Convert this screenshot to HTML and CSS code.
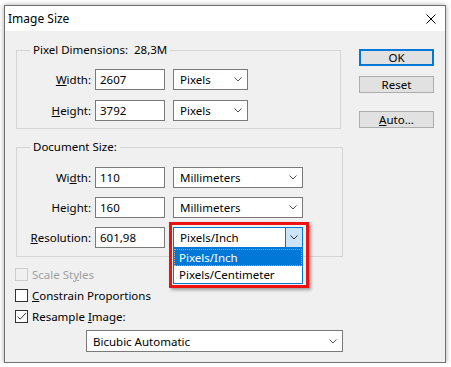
FILE: index.html
```html
<!DOCTYPE html>
<html lang="en">

<head>
    <meta charset="UTF-8">
    <title>Image Size</title>
    <link rel="stylesheet" href="styles.css">
</head>

<body>
    <div class="window">
        <div class="titlebar">
            <span class="title">Image Size</span>
            <svg class="close" width="10" height="10" viewBox="0 0 10 10">
                <path d="M0.5 0.5 L9.5 9.5 M9.5 0.5 L0.5 9.5" stroke="#000" stroke-width="1" fill="none"/>
            </svg>
        </div>
        <div class="client">
            <div class="main">
                <fieldset class="group pixels-group">
                    <legend>Pixel Dimensions:&nbsp; 28,3M</legend>
                    <div class="row">
                        <label><u>W</u>idth:</label>
                        <input class="field" type="text" value="2607" readonly>
                        <div class="select short">
                            <span>Pixels</span>
                            <svg width="8" height="5" viewBox="0 0 8 5"><path d="M0.5 0.5 L4 4 L7.5 0.5" stroke="#555" fill="none"/></svg>
                        </div>
                    </div>
                    <div class="row">
                        <label><u>H</u>eight:</label>
                        <input class="field" type="text" value="3792" readonly>
                        <div class="select short">
                            <span>Pixels</span>
                            <svg width="8" height="5" viewBox="0 0 8 5"><path d="M0.5 0.5 L4 4 L7.5 0.5" stroke="#555" fill="none"/></svg>
                        </div>
                    </div>
                </fieldset>

                <fieldset class="group doc-group">
                    <legend>Document Size:</legend>
                    <div class="row">
                        <label>Wi<u>d</u>th:</label>
                        <input class="field" type="text" value="110" readonly>
                        <div class="select long">
                            <span>Millimeters</span>
                            <svg width="8" height="5" viewBox="0 0 8 5"><path d="M0.5 0.5 L4 4 L7.5 0.5" stroke="#555" fill="none"/></svg>
                        </div>
                    </div>
                    <div class="row">
                        <label>Hei<u>g</u>ht:</label>
                        <input class="field" type="text" value="160" readonly>
                        <div class="select long">
                            <span>Millimeters</span>
                            <svg width="8" height="5" viewBox="0 0 8 5"><path d="M0.5 0.5 L4 4 L7.5 0.5" stroke="#555" fill="none"/></svg>
                        </div>
                    </div>
                    <div class="row">
                        <label><u>R</u>esolution:</label>
                        <input class="field" type="text" value="601,98" readonly>
                        <div class="select long open">
                            <span>Pixels/Inch</span>
                            <span class="drop-btn">
                                <svg width="8" height="5" viewBox="0 0 8 5"><path d="M0.5 0.5 L4 4 L7.5 0.5" stroke="#333" fill="none"/></svg>
                            </span>
                            <div class="highlight-box"></div>
                            <ul class="drop-list">
                                <li class="active">Pixels/Inch</li>
                                <li>Pixels/Centimeter</li>
                            </ul>
                        </div>
                    </div>
                </fieldset>

                <div class="checks">
                    <div class="check disabled"><span class="box"></span><span>Scale St<u>y</u>les</span></div>
                    <div class="check"><span class="box"></span><span><u>C</u>onstrain Proportions</span></div>
                    <div class="check">
                        <span class="box">
                            <svg width="11" height="11" viewBox="0 0 11 11"><path d="M1.5 5.5 L4.2 8.2 L9.8 2.2" stroke="#333" stroke-width="1" fill="none"/></svg>
                        </span>
                        <span>Resample <u>I</u>mage:</span>
                    </div>
                </div>

                <div class="select method">
                    <span>Bicubic Automatic</span>
                    <svg width="8" height="5" viewBox="0 0 8 5"><path d="M0.5 0.5 L4 4 L7.5 0.5" stroke="#555" fill="none"/></svg>
                </div>
            </div>

            <div class="side">
                <button class="btn default">OK</button>
                <button class="btn reset">Reset</button>
                <button class="btn auto"><u>A</u>uto...</button>
            </div>
        </div>
    </div>
</body>

</html>
```

FILE: styles.css
```css
* {
    box-sizing: border-box;
}

body {
    margin: 0;
    background-color: #fff;
    font-family: "Noto Sans", "Open Sans", sans-serif;
    font-size: 11.5px;
    color: #000;
}

u {
    text-underline-offset: 1px;
}

.window {
    margin: 5px 0 0 4px;
    width: 442px;
    height: 358px;
    border: 1px solid #707070;
    box-shadow: 0 0 5px rgba(0, 0, 0, 0.35);
    background-color: #f0f0f0;
    display: flex;
    flex-direction: column;
}

.titlebar {
    flex: none;
    height: 25px;
    background-color: #fff;
    display: flex;
    align-items: center;
    justify-content: space-between;
    padding: 0 9px 0 3px;
}

.title {
    font-size: 12px;
}

.client {
    flex: 1;
    display: flex;
    padding: 11px 0 0 10px;
}

.main {
    width: 334px;
}

.group {
    margin: 0 0 0 1px;
    padding: 11px 0 7px 13px;
    border: 1px solid #d5d5d5;
    min-width: 0;
}

.group legend {
    padding: 0 3px;
    line-height: 16px;
}

.pixels-group {
    width: 325px;
}

.doc-group {
    width: 327px;
    margin-top: 10px;
    padding-top: 12px;
    padding-bottom: 8px;
}

.row {
    display: flex;
    align-items: center;
    height: 21px;
}

.pixels-group .row + .row {
    margin-top: 10px;
}

.doc-group .row + .row {
    margin-top: 9px;
}

.row label {
    width: 61px;
    text-align: right;
    margin-right: 4px;
}

.field {
    width: 70px;
    height: 21px;
    border: 1px solid #7a7a7a;
    background-color: #fff;
    font: inherit;
    color: #000;
    padding: 0 0 0 4px;
    margin: 0;
    outline: none;
}

.select {
    position: relative;
    height: 21px;
    border: 1px solid #7a7a7a;
    background-color: #fff;
    display: flex;
    align-items: center;
    justify-content: space-between;
    padding: 0 5px 0 6px;
}

.select.short {
    width: 75px;
    margin-left: 8px;
}

.select.long {
    width: 130px;
    margin-left: 8px;
}

.select.open {
    border-color: #0078d7;
    padding-right: 0;
}

.drop-btn {
    width: 17px;
    height: 19px;
    background-color: #cce4f7;
    border-left: 1px solid #0078d7;
    display: flex;
    align-items: center;
    justify-content: center;
}

.highlight-box {
    position: absolute;
    left: -5px;
    top: -6px;
    width: 140px;
    height: 66px;
    border: 3px solid #ee1111;
    box-shadow: 2px 2px 3px rgba(0, 0, 0, 0.35);
    pointer-events: none;
}

.drop-list {
    position: absolute;
    left: -1px;
    top: 20px;
    width: 130px;
    margin: 0;
    padding: 0;
    list-style: none;
    background-color: #fff;
    border: 1px solid #0078d7;
}

.drop-list li {
    height: 17px;
    line-height: 15px;
    padding-left: 4px;
    border: 1px solid transparent;
}

.drop-list li.active {
    background-color: #0078d7;
    color: #fff;
    border: 1px dotted #e8a04a;
}

.checks {
    margin-top: 7px;
}

.check {
    display: flex;
    align-items: center;
    height: 21px;
}

.check .box {
    width: 13px;
    height: 13px;
    border: 1px solid #333;
    background-color: #fff;
    margin-right: 4px;
    display: flex;
    align-items: center;
    justify-content: center;
}

.check.disabled {
    color: #a0a0a0;
}

.check.disabled .box {
    border-color: #cccccc;
    background-color: #f0f0f0;
}

.select.method {
    width: 257px;
    height: 22px;
    margin: 3px 0 0 71px;
}

.side {
    margin-left: 10px;
    padding-top: 7px;
    display: flex;
    flex-direction: column;
}

.btn {
    width: 75px;
    height: 17px;
    padding: 0;
    margin: 0;
    border: 1px solid #adadad;
    background-color: #e1e1e1;
    font: inherit;
    color: #000;
    line-height: 15px;
}

.btn.default {
    border: 2px solid #0078d7;
    line-height: 13px;
}

.btn.reset {
    margin-top: 10px;
}

.btn.auto {
    margin-top: 18px;
}
```
